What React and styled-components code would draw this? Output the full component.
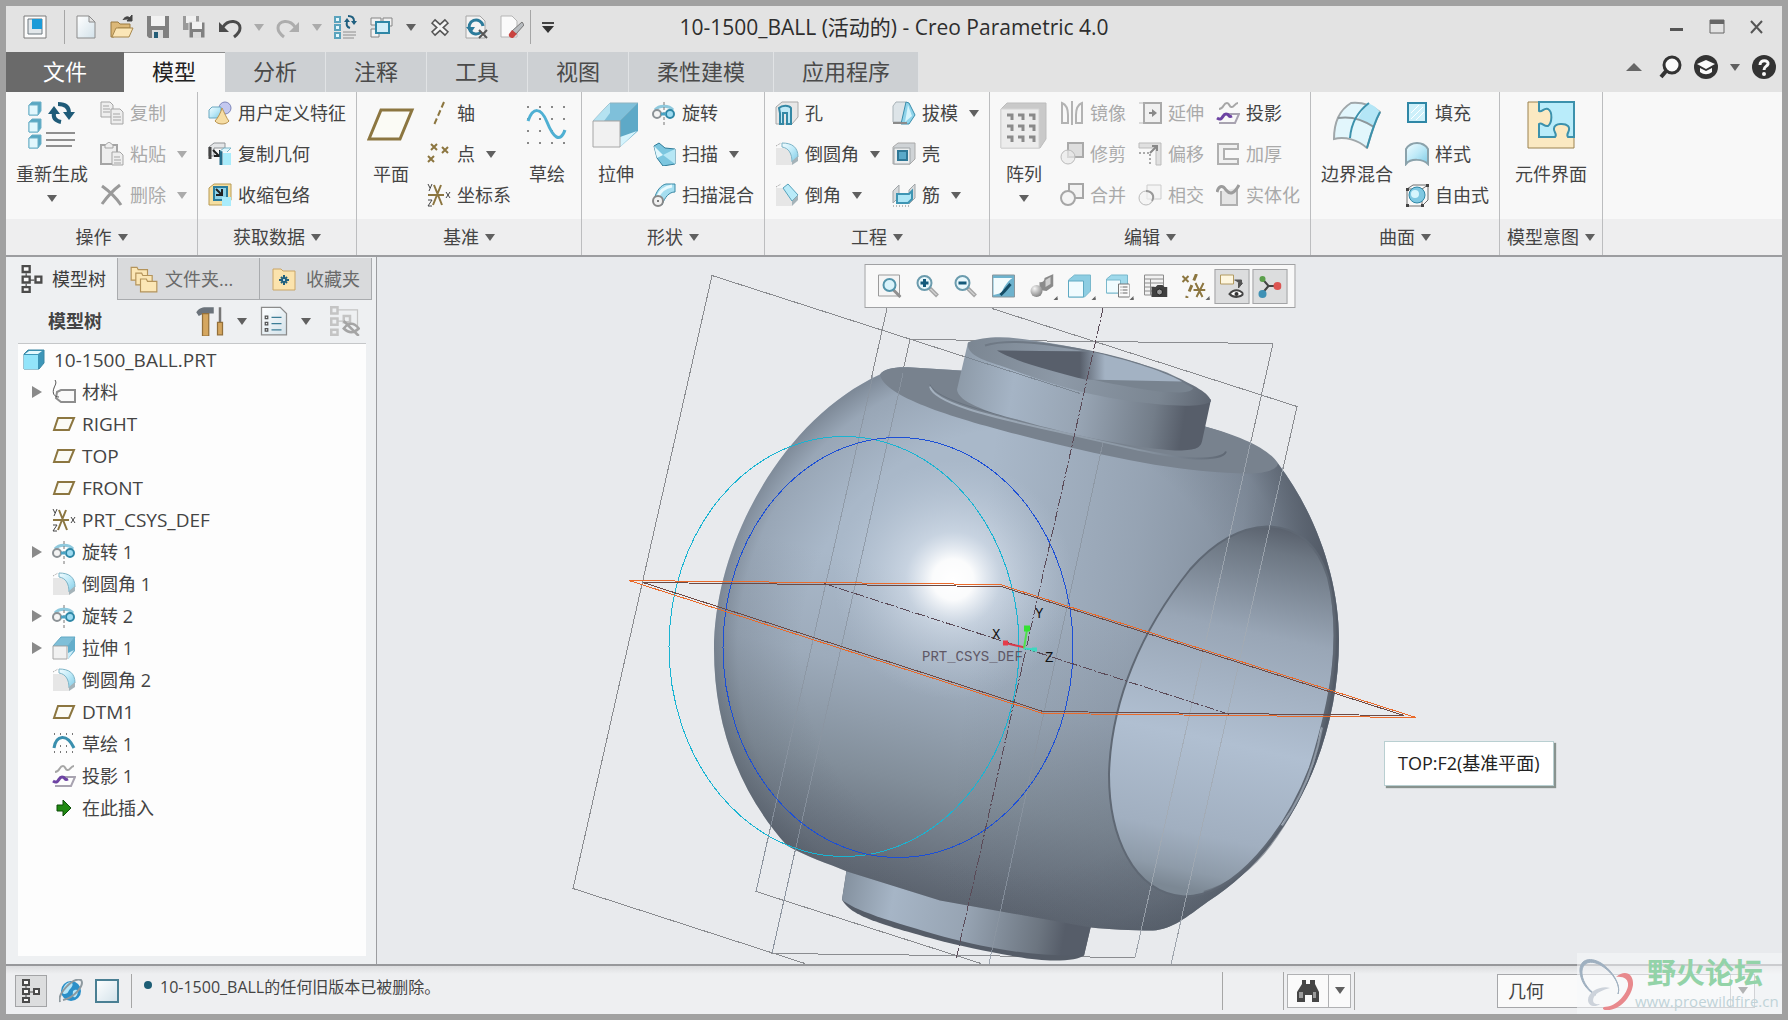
import React from "react";
import styled, { createGlobalStyle, css } from "styled-components";

const BLUE = "#2f87a6";
const PALE = "#bfeaf8";
const GOLD = "#8c7640";
const GREY = "#a5a5a5";

/* ---------- icons, 24 x 24 unless they are in the big set ---------- */

const revolve = (
  <>
    <path d="M3 9c4-5 14-5 18 0" fill="none" stroke="#8fc9dd" strokeWidth="3" />
    <path d="M12 1v23" stroke="#777" strokeDasharray="3 2" />
    <circle cx="5" cy="13" r="4" fill="#f4f4f4" stroke="#8c9296" strokeWidth="2" />
    <circle cx="18" cy="13" r="4" fill="#9fdcf2" stroke={BLUE} strokeWidth="2" />
    <path d="M9 13h5" stroke="#4aa3c3" strokeWidth="3" />
  </>
);

const round = (
  <>
    <path d="M1 6h9c5 1 7 5 7 10v7H1z" fill="#e6e6e6" />
    <path d="M7 1c10 0 16 4 16 14l-6 5C17 12 14 6 7 5z" fill="url(#aqua)" stroke="#7cb3c6" />
    <path d="M17 19l6-5v5l-6 4z" fill="#a5b3b9" />
    <path d="M1 4l5-3" stroke="#999" strokeDasharray="1 1" />
  </>
);

const extrude = (
  <>
    <path d="M1 10L9 1h14l-7 9z" fill="#7fbfd8" stroke="#63a9c4" />
    <path d="M23 1v14l-7 8V10z" fill="#63adca" />
    <path d="M16 17l6-3-6 9z" fill="#cdeefa" />
    <path d="M1 10h14v13H1z" fill="#f1f1f1" stroke="#a6a6a6" />
  </>
);

const project = (
  <>
    <path d="M3 8c5 0 4-6 8-6 3 0 2 5 5 4 2 0 3-4 6-4" fill="none" stroke="#a6a6a6" strokeWidth="2" />
    <path d="M3 22h16l4-9H11" fill="none" stroke="#a8a3b0" strokeWidth="2" />
    <path d="M1 17c6 4 5-4 9-4 4 0 2 4 6 2" fill="none" stroke="#6d43a3" strokeWidth="3" />
  </>
);

const csys = (
  <>
    <path d="M1 12h16M7 2l8 20M14 2L6 22" stroke={GOLD} strokeWidth="2" />
    <path d="M1 1l2 4M5 1L2 8M19 9l4 6M23 9l-4 6M1 17h4l-4 6h4" stroke="#444" fill="none" strokeWidth="1" />
  </>
);

const plane = <path d="M6 6h16l-5 12H2z" fill="#fbfbf5" stroke={GOLD} strokeWidth="2" />;

const treeNodes = (
  <g fill="#fafafa" stroke="#4b4b4b" strokeWidth="2">
    <path d="M7 7v3M7 16v2M10 13h4" strokeWidth="1" />
    <path d="M4 1h6v5H4zM4 10h6v5H4zM4 19h6v4H4zM15 10h5v5h-5z" />
  </g>
);

const magnifier = (
  <>
    <path d="M14 14l8 8" stroke="#a8a8a8" strokeWidth="4" />
    <path d="M15 15l6 6" stroke="#eee" strokeWidth="1" />
    <circle cx="9" cy="9" r="7" fill="#e9f8fc" stroke="#6b9bad" strokeWidth="2" />
  </>
);

const regenCubes = (
  <>
    <path d="M1 2h5v5H1zM1 10h5v5H1zM1 18h5v5H1z" fill="#e6f8fd" stroke="#5aa3bd" strokeWidth="2" />
    <path d="M9 17h13M9 20h13M9 23h11" stroke="#8e8e8e" strokeWidth="1" />
    <path d="M16 13c-3-1-4-3-3-6M14 1c4 0 6 2 6 5" fill="none" stroke="#1f5f7f" strokeWidth="2" />
    <path d="M10 7h6l-3-4zM17 6h6l-3 4z" fill="#1f5f7f" />
  </>
);

const ICONS = {
  app: (
    <>
      <path d="M1 1h22v22H1z" fill="#fcfcfc" stroke="#7b7b7b" />
      <path d="M5 4h14v15H5z" fill="#e2e7ea" stroke="#6c7880" />
      <path d="M9 4h10v10H9z" fill="#1b9bd8" />
    </>
  ),
  file: (
    <path d="M3 1h12l6 6v16H3zM15 1v6h6" fill="url(#sheet)" stroke="#8b8b8b" />
  ),
  open: (
    <>
      <path d="M1 7h7l2 2h10v4H8L4 22H1z" fill="#dcb878" stroke="#9a7a40" />
      <path d="M6 13h17l-4 9H2z" fill="#fbe6b7" stroke="#a8884d" />
      <path d="M13 5c2-4 6-4 8-1M22 0v6h-5z" fill="#444" stroke="#444" />
    </>
  ),
  save: (
    <>
      <path d="M1 1h22v22H3l-2-2z" fill="#808080" />
      <path d="M5 1h14v10H5z" fill="#f2f2f2" />
      <path d="M6 15h11v8H6z" fill="#dcdcdc" />
      <path d="M8 17h4v6H8z" fill="#245d77" />
    </>
  ),
  saveAll: (
    <>
      <path d="M1 1h16v14H1z" fill="#9a9a9a" />
      <path d="M4 1h10v7H4z" fill="#f0f0f0" />
      <path d="M7 7h16v16H7z" fill="#808080" stroke="#e3e3e3" />
      <path d="M10 7h10v7H10z" fill="#f2f2f2" />
      <path d="M11 17h8v6h-8z" fill="#dcdcdc" />
    </>
  ),
  undo: (
    <>
      <path d="M5 12c5-8 17-7 17 1 0 4-2 6-6 9" fill="none" stroke="#4b4b4b" strokeWidth="3" />
      <path d="M1 7v10h10z" fill="#4b4b4b" />
    </>
  ),
  redo: (
    <>
      <path d="M19 12C14 4 2 5 2 13c0 4 2 6 6 9" fill="none" stroke="#adadad" strokeWidth="3" />
      <path d="M23 7v10H13z" fill="#adadad" />
    </>
  ),
  regen: regenCubes,
  windows: (
    <>
      <path d="M1 3h10v7H1zM13 3h9v8h-9zM1 14h8v8H1z" fill="#f1f1f1" stroke="#858585" />
      <path d="M6 7h13v11H6z" fill="#d3eef8" stroke={BLUE} strokeWidth="2" />
    </>
  ),
  closeWin: (
    <>
      <path d="M5 6l14 13M19 6L5 19" stroke="#555" strokeWidth="6" />
      <path d="M6 7l12 11M18 7L6 18" stroke="#f5f5f5" strokeWidth="3" />
    </>
  ),
  erase: (
    <>
      <path d="M2 1h14l5 5v17H2z" fill="#f3f3f3" stroke="#a5a5a5" />
      <path d="M19 11a7 7 0 1 0-2 6" fill="none" stroke="#2c7b9b" strokeWidth="3" />
      <path d="M2 12h9l-4 6z" fill="#2c7b9b" />
      <path d="M15 15l8 8M23 15l-8 8" stroke="#555" strokeWidth="2" />
    </>
  ),
  eraser: (
    <>
      <path d="M1 1h11l5 5v16H1z" fill="#fafafa" stroke="#b5b5b5" />
      <path d="M22 7l2 3-8 9-4-3z" fill="#b7bbbf" stroke="#777" />
      <path d="M12 15l5 4-4 4c-3 0-5-2-4-4z" fill="#c9433f" />
    </>
  ),
  copy: (
    <g fill="#eee" stroke={GREY}>
      <path d="M1 1h9l3 3v12H1z" />
      <path d="M3 5h6M3 8h7M3 11h7" />
      <path d="M11 8h9l3 3v12H11z" />
      <path d="M13 13h7M13 16h8M13 19h8" />
    </g>
  ),
  paste: (
    <g fill="#eee" stroke={GREY}>
      <path d="M1 3h16v19H1z" strokeWidth="2" />
      <path d="M5 3l4-3 4 3v3H5z" />
      <path d="M12 10h8l3 3v10H12z" />
      <path d="M14 15h6M14 18h7M14 21h7" />
    </g>
  ),
  del: <path d="M2 3c7 5 13 10 19 19M20 2C12 8 7 14 2 21" fill="none" stroke="#9a9a9a" strokeWidth="3" />,
  udf: (
    <>
      <circle cx="17" cy="7" r="6" fill="#c3c8ef" stroke="#7e86bb" />
      <path d="M1 9l3-3h9v11H1z" fill="url(#aqua)" stroke="#6aa8c0" />
      <path d="M14 7c2 4 5 11 7 13-3 4-11 4-14 0 3-3 6-9 7-13z" fill="#f6dda4" stroke="#b8924e" />
    </>
  ),
  copyGeom: (
    <>
      <path d="M1 5l5-4h11v5H6v8H1z" fill="#e4e6e8" stroke="#909498" />
      <path d="M2 5v12" stroke="#444" strokeWidth="3" />
      <path d="M5 8l6 6M12 8v6H6" stroke="#222" strokeWidth="2" fill="none" />
      <path d="M15 11h8v12h-8z" fill="#a9ecfb" />
      <path d="M13 9v14" stroke="#256d8b" strokeWidth="3" />
      <path d="M12 9l4-3h7l-4 4" fill="#dff6fc" stroke="#7bb6c9" />
    </>
  ),
  shrink: (
    <>
      <path d="M1 5l5-4h17v16l-4 5H1z" fill="#f5dfa2" stroke="#b89a53" />
      <path d="M6 4h13v13H6z" fill="#8fd3e8" stroke="#2b7d9d" strokeWidth="2" />
      <path d="M8 6l6 6M14 6v6H8" stroke="#222" strokeWidth="2" fill="none" />
      <path d="M14 14h9v9h-9z" fill="#a9ecfb" />
    </>
  ),
  axis: <path d="M17 1L7 24" stroke={GOLD} strokeWidth="2" strokeDasharray="6 3" />,
  point: (
    <path
      d="M4 2l6 6M10 2l-6 6M15 5l6 6M21 5l-6 6M1 14l6 6M7 14l-6 6"
      stroke={GOLD}
      strokeWidth="2"
    />
  ),
  csys,
  revolve,
  sweep: (
    <>
      <path d="M2 4l5-3 6 5 10 1v15l-12 2-6-8z" fill="#7cc6df" stroke="#2e7c99" strokeWidth="1" />
      <path d="M2 4l3 12 6-3z" fill="#e0f7fd" />
      <path d="M11 13l12-6v15z" fill="#b6e7f5" />
    </>
  ),
  blend: (
    <>
      <path d="M2 17C4 8 9 2 14 1h9v8c-6 0-10 5-13 13z" fill="#a5def0" stroke="#3b89a5" />
      <path d="M5 15C8 8 13 4 20 3" stroke="#e9fafe" strokeWidth="3" fill="none" />
      <circle cx="6" cy="18" r="5" fill="#f1f1f1" stroke="#888" strokeWidth="2" />
      <circle cx="6" cy="18" r="1" fill="#555" />
    </>
  ),
  hole: (
    <>
      <path d="M1 6l6-5h16v15l-6 7H1z" fill="#e7e7e7" stroke="#a9a9a9" />
      <path d="M4 7c3-3 10-3 12 0v16h-4V12H8v11H5V12z" fill="#bfe9f6" stroke="#3488a5" strokeWidth="2" />
    </>
  ),
  round,
  chamfer: (
    <>
      <path d="M1 5h8l8 9v9H1z" fill="#e6e6e6" />
      <path d="M8 5l5-4 10 11-6 6z" fill="#b9ebf9" stroke="#57a2bb" />
      <path d="M17 18l6-6v5l-6 6z" fill="#a5b3b9" />
      <path d="M1 4l5-3" stroke="#999" strokeDasharray="1 1" />
    </>
  ),
  draft: (
    <>
      <path d="M1 5l3-4h10v4l-3 16H1z" fill="#dde4e8" stroke="#a9b3b8" />
      <path d="M14 1l3 1 6 12-6 9H9z" fill="#8ed3ea" stroke="#3b8eac" />
      <path d="M16 4l4 11-7 6z" fill="#d6f4fc" />
      <path d="M1 22h14" stroke="#8a8a8a" strokeWidth="2" />
    </>
  ),
  shell: (
    <>
      <path d="M1 5l5-4h17v16l-5 5H1z" fill="#cfd3d6" stroke="#a9a9a9" />
      <path d="M2 6h16v16H2z" fill="#eceeef" stroke="#a0a5a8" />
      <path d="M6 9h9v9H6z" fill="#5aa9c9" stroke="#2f7897" strokeWidth="2" />
    </>
  ),
  rib: (
    <>
      <path d="M1 8l6-6v12l-6 6z" fill="#d7dadc" stroke="#a0a5a8" />
      <path d="M17 7l6-6v14l-6 6z" fill="#d7dadc" stroke="#a0a5a8" />
      <path d="M5 11h12l3-3v8l-4 4H5z" fill="#aee6f6" stroke="#3f95b3" strokeWidth="2" />
      <path d="M1 23h17" stroke="#777" strokeDasharray="1 2" />
    </>
  ),
  mirror: (
    <path
      d="M2 2c5 2 6 7 6 12v8H2zM22 2c-5 2-6 7-6 12v8h6zM12 0v24"
      fill="none"
      stroke="#b3b3b3"
      strokeWidth="2"
    />
  ),
  extend: (
    <>
      <path d="M6 2h17v20H6z" fill="#f0f0f0" stroke="#aaa" strokeWidth="2" />
      <path d="M1 2h4M1 22h4" stroke="#bbb" />
      <path d="M11 12h5" stroke="#888" strokeWidth="2" />
      <path d="M14 8l5 4-5 4z" fill="#888" />
    </>
  ),
  trim: (
    <>
      <path d="M8 1h15v14H8z" fill="#dedede" stroke="#aaa" strokeWidth="2" />
      <circle cx="8" cy="15" r="7" fill="#e9e9e9" fillOpacity="0.7" stroke="#bbb" strokeWidth="1" />
    </>
  ),
  offset: (
    <>
      <path d="M1 1h22v22h-5V6H1z" fill="#e0e0e0" stroke="#bbb" />
      <path d="M1 11h11v12" fill="none" stroke="#aaa" strokeDasharray="2 2" strokeWidth="2" />
      <path d="M12 11l6-6M14 4h5v5" fill="none" stroke="#888" strokeWidth="2" />
    </>
  ),
  merge: (
    <>
      <path d="M9 8V1h14v14h-8" fill="#f2f2f2" stroke="#a6a6a6" strokeWidth="2" />
      <circle cx="8" cy="15" r="7" fill="#f2f2f2" fillOpacity="0.8" stroke="#a6a6a6" strokeWidth="2" />
    </>
  ),
  intersect: (
    <>
      <path d="M9 2h14v14H9z" fill="#f4f4f4" stroke="#ccc" />
      <circle cx="8" cy="15" r="7" fill="#f4f4f4" fillOpacity="0.6" stroke="#bbb" />
      <path d="M8 8c6 0 9 5 6 10" fill="none" stroke="#999" strokeWidth="2" />
    </>
  ),
  project,
  thicken: <path d="M2 2h20v5H8v10h14v5H2z" fill="#f1f1f1" stroke="#b0b0b0" strokeWidth="2" />,
  solidify: (
    <>
      <path d="M5 8v14h16V5" fill="#e5e5e5" stroke="#b0b0b0" strokeWidth="2" />
      <path d="M1 9c2-7 6-7 9-2 4 5 8 4 13-5" fill="none" stroke="#9c9c9c" strokeWidth="3" />
    </>
  ),
  fill: (
    <>
      <path d="M3 2h18v19H3z" fill="#cdf0fa" stroke={BLUE} strokeWidth="2" />
      <path d="M6 12l8-8M6 18L18 6M11 19l8-8" stroke="#fff" strokeWidth="1" />
    </>
  ),
  style: (
    <path d="M1 7c5-8 17-8 22 0v15c-5-5-17-6-22 0z" fill="url(#aqua)" stroke="#8ba2ab" strokeWidth="2" />
  ),
  freestyle: (
    <>
      <path d="M2 6l6-4h15v15l-6 6H2zM2 6h15v17M17 6l6-4" fill="none" stroke="#6e6e6e" />
      <circle cx="12" cy="12" r="8" fill="#7fc8e2" stroke={BLUE} />
      <circle cx="10" cy="11" r="4" fill="#d6f5fd" />
      <path d="M1 5h3v3H1zM21 1h3v3h-3zM1 21h3v3H1zM16 21h3v3h-3z" fill="#444" />
    </>
  ),
  tree: treeNodes,
  folders: (
    <g stroke="#b4935a" fill="#fbe6b5">
      <path d="M1 2h5l1 2h8v9H1z" />
      <path d="M5 7h5l1 2h8v8H5z" />
      <path d="M9 12h5l1 2h8v9H9z" />
    </g>
  ),
  favorite: (
    <>
      <path d="M1 2h8l2 2h12v19H1z" fill="#fbe3ad" stroke="#caa566" />
      <path d="M12 8v10M7 13h10M9 10l6 6M15 10l-6 6" stroke="#22627f" strokeWidth="2" />
      <circle cx="12" cy="13" r="1" fill="#fff" />
    </>
  ),
  tools: (
    <>
      <path d="M1 5c3-4 5-4 9-4h5v5H7L3 8z" fill="#6b737b" />
      <path d="M6 6h5v18H6z" fill="#d5a760" stroke="#94703a" />
      <path d="M20 1v12" stroke="#777" strokeWidth="2" />
      <path d="M18 13h4v10h-4z" fill="#d5a760" stroke="#94703a" />
    </>
  ),
  list: (
    <>
      <path d="M2 1h15l5 5v17H2z" fill="url(#sheet)" stroke="#8b8b8b" />
      <path d="M10 9h8M10 14h8M10 19h8" stroke="#3c7d96" />
      <path d="M5 8h2v2H5zM5 13h2v2H5zM5 18h2v2H5z" fill="none" stroke="#555" />
    </>
  ),
  hideTree: (
    <g stroke="#c4c4c4" fill="none" strokeWidth="2">
      <path d="M1 1h5v5H1zM1 10h5v5H1zM1 19h5v4H1zM11 8h5v5h-5z" />
      <path d="M6 3h16v14M6 12h5" strokeWidth="1" />
      <path d="M11 18c4-5 8-5 12 0-4 4-8 4-12 0zM11 12l12 12" stroke="#a5a5a5" />
    </g>
  ),
  part: (
    <>
      <path d="M2 6l4-4h16v13l-5 6H2z" fill="#3d96b8" stroke="#3a87a4" />
      <path d="M2 7h14v14H2z" fill="#92e4fa" />
      <path d="M3 6l4-3h13l-4 3z" fill="#e4f9fe" />
    </>
  ),
  material: (
    <>
      <path d="M5 12l4-2h14v12H9l-5-4z" fill="#fafafa" stroke="#8d8d8d" strokeWidth="2" />
      <path d="M3 0c2 3 0 5-1 8-2 5 0 9 5 9" fill="none" stroke="#555" strokeWidth="1" />
    </>
  ),
  plane,
  extrude,
  sketch: (
    <>
      <path d="M2 16C4 3 15 1 22 16" fill="none" stroke="#3a8fae" strokeWidth="3" />
      <path d="M2 2h21M2 20h21M8 14h12" stroke="#777" strokeDasharray="1 5" strokeWidth="2" />
    </>
  ),
  insert: <path d="M5 9h6V4l8 8-8 8v-5H5z" fill="#208a12" stroke="#0c4d08" />,
  refit: (
    <>
      <path d="M1 1h21v21H1z" fill="#f5f5f5" stroke="#9b9b9b" />
      <path d="M15 15l8 8" stroke="#909090" strokeWidth="3" />
      <circle cx="12" cy="11" r="6" fill="#d9f3fb" stroke="#5394ab" strokeWidth="2" />
    </>
  ),
  zoomIn: (
    <>
      {magnifier}
      <path d="M9 5v8M5 9h8" stroke="#145a7b" strokeWidth="3" />
    </>
  ),
  zoomOut: (
    <>
      {magnifier}
      <path d="M5 9h8" stroke="#145a7b" strokeWidth="3" />
    </>
  ),
  repaint: (
    <>
      <path d="M1 1h22v22H1z" fill="#6db2cd" stroke="#8a979d" />
      <path d="M2 4h19C15 8 12 14 10 19l-8 2z" fill="#f2fbfd" />
      <path d="M19 10l-6 7-4 4" stroke="#154d66" strokeWidth="3" />
    </>
  ),
  shade: (
    <>
      <path d="M10 8c4 1 5-2 5-4l9-4v12l-7 5-7-1z" fill="#8b8b8b" />
      <path d="M16 6l5-3v7l-5 3z" fill="#d0d0d0" />
      <circle cx="7" cy="17" r="6" fill="url(#steel)" />
    </>
  ),
  cube: (
    <>
      <path d="M1 6l6-5h16v16l-6 6H1z" fill="#8dcde2" stroke="#79b8cc" />
      <path d="M1 7h15v16H1z" fill="#f0fbfe" stroke="#5fa9c2" />
    </>
  ),
  views: (
    <>
      <path d="M1 5l5-4h16v14l-6 4H1z" fill="#9fd9eb" stroke="#79b8cc" />
      <path d="M1 6h14v13H1z" fill="#f0fbfe" stroke="#79b8cc" />
      <path d="M13 10h11v13H13z" fill="#fafafa" stroke="#777" />
      <path d="M15 13h7M15 16h7M15 19h7" stroke="#666" strokeDasharray="1 1 5" />
    </>
  ),
  camera: (
    <>
      <path d="M1 1h19v20H1zM1 5h19M7 5v16M1 9h19M1 13h10M1 17h10" fill="#f2f2f2" stroke="#8c8c8c" />
      <path d="M8 13h4l2-2h5l2 2h3v10H8z" fill="#3f3f3f" />
      <circle cx="16" cy="18" r="3" fill="#999" stroke="#222" />
    </>
  ),
  datums: (
    <>
      <path d="M1 2l6 6M7 2L1 8M12 16h12M14 9l7 14M22 9l-7 14" stroke={GOLD} strokeWidth="2" />
      <path d="M15 0L5 24" stroke={GOLD} strokeWidth="3" strokeDasharray="7 5" />
    </>
  ),
  annotate: (
    <>
      <path d="M1 1h13v9H1z" fill="#fdf6df" stroke="#b29a60" />
      <path d="M15 6h7v5M19 9h4l-4 5z" fill="#555" stroke="#555" />
      <path d="M10 20c4-5 10-5 14 0-4 4-10 4-14 0z" fill="#fff" stroke="#444" strokeWidth="2" />
      <circle cx="17" cy="20" r="2" fill="#333" />
    </>
  ),
  spin: (
    <>
      <path d="M5 5l6 7h8M11 12l-6 7" fill="none" stroke="#444" strokeWidth="2" />
      <circle cx="5" cy="5" r="3" fill="#5c9f4c" />
      <circle cx="20" cy="12" r="4" fill="#dc5552" />
      <circle cx="5" cy="20" r="4" fill="#3f91b5" />
    </>
  ),
  globe: (
    <>
      <circle cx="12" cy="12" r="10" fill="#2b8fc8" />
      <path d="M7 5c5-4 9 0 5 4s-2 5-6 6-3-6 1-10zM14 12c4-3 6 0 4 4s-5 3-4-4z" fill="#b5e6f9" />
      <path d="M1 23C-2 15 14-2 22 1c4 5-7 18-18 20" fill="none" stroke="#8e999f" strokeWidth="2" />
    </>
  ),
  screen: <path d="M1 1h22v22H1z" fill="url(#sheet)" stroke="#4a7f93" strokeWidth="2" />,
  binoculars: (
    <>
      <path d="M6 1h4v4h4V1h5v4l4 8v10h-7v-7H9v7H1V13l5-8z" fill="#454545" />
      <path d="M3 13h4v6H3zM17 13h3v6h-3z" fill="#9b9b9b" />
    </>
  ),
  search: (
    <>
      <path d="M9 15l-6 7" stroke="#333" strokeWidth="4" />
      <circle cx="14" cy="10" r="8" fill="#fafafa" stroke="#333" strokeWidth="3" />
    </>
  ),
  learn: (
    <>
      <circle cx="12" cy="12" r="12" fill="#333" />
      <path d="M3 9l9-4 9 4-9 5z" fill="#fafafa" />
      <path d="M6 13l6 3 6-3v4c-4 3-8 3-12 0z" fill="#fafafa" />
    </>
  ),
  help: (
    <>
      <circle cx="12" cy="12" r="12" fill="#333" />
      <path d="M8 10c0-6 9-5 8-1-1 3-4 2-4 6" fill="none" stroke="#fafafa" strokeWidth="3" />
      <circle cx="12" cy="19" r="2" fill="#fafafa" />
    </>
  ),
  minimize: <path d="M5 13h13v3H5z" fill="#555" />,
  restore: (
    <>
      <path d="M5 5h14v13H5z" fill="none" stroke="#666" strokeWidth="1" />
      <path d="M5 5h14v4H5z" fill="#666" />
    </>
  ),
  closeApp: <path d="M6 6l11 12M17 6L6 18" stroke="#555" strokeWidth="2" />,
};

const BIG_ICONS = {
  regenerate: (
    <>
      {[1, 18, 34].map((y) => (
        <g key={y} stroke="#6db0c7">
          <path d={`M1 ${y + 3}l3-3h9v9l-3 4H1z`} fill="#58a7c3" />
          <path d={`M1 ${y + 3}h9v10H1z`} fill="#e1f7fd" />
        </g>
      ))}
      <path d="M18 32h29M18 39h29M18 45h26" stroke="#8f8f8f" strokeWidth="2" />
      <path d="M33 21c-5-1-8-4-7-9M30 3c7 0 11 3 11 9" fill="none" stroke="#1f5b78" strokeWidth="4" />
      <path d="M20 13h12l-6-8zM35 11h12l-6 8z" fill="#1f5b78" />
    </>
  ),
  plane: <path d="M14 9h31L33 38H2z" fill="#fbfbf5" stroke={GOLD} strokeWidth="3" />,
  sketch: (
    <>
      <path d="M4 6h42M4 18h42M4 30h42M4 42h42" stroke="#888" strokeWidth="2" strokeDasharray="2 10" />
      <path d="M5 20C10 6 18 6 24 21s13 22 18 8" fill="none" stroke="#4fb0d3" strokeWidth="3" />
    </>
  ),
  extrude: (
    <>
      <path d="M1 20L18 2h28L28 20z" fill="#7fc0da" stroke="#8fb3c0" />
      <path d="M18 2v10l-6 8H1z" fill="#b5e2f1" />
      <path d="M46 2v28L28 46V20z" fill="#5ea9c7" />
      <path d="M28 36l17-6-17 16z" fill="#d5f3fc" />
      <path d="M1 20h27v26H1z" fill="#f1f1f1" stroke="#a6a6a6" strokeWidth="1" />
    </>
  ),
  pattern: (
    <>
      <path d="M1 8l6-6h39v36l-6 9H1z" fill="#c9c9c9" stroke="#bdbdbd" />
      <path d="M1 8h38v39H1z" fill="#ececec" stroke="#d4d4d4" />
      {[14, 25, 36].map((y) => (
        <path key={y} d={`M7 ${y}h5v5M18 ${y}h5v5M29 ${y}h5v5`} fill="none" stroke="#8a8a8a" strokeWidth="3" />
      ))}
    </>
  ),
  boundary: (
    <>
      <path d="M1 38C1 20 8 8 18 2c10-1 19 1 29 9-6 11-9 22-13 36C25 39 12 35 1 38z" fill="#e2f6fc" stroke="#a0a7aa" strokeWidth="2" />
      <path d="M34 2c7 2 10 5 13 9-3 5-5 10-7 16-5-4-11-7-16-8z" fill="#b4e6f6" />
      <path d="M5 17c12-2 24 1 36 9" fill="none" stroke="#8d979b" strokeWidth="2" />
      <path d="M36 2C24 11 18 24 17 37M47 11c-6 11-9 22-13 36" fill="none" stroke="#3c91ac" strokeWidth="2" />
    </>
  ),
  component: (
    <>
      <path d="M1 1h46v46H1z" fill="#fbe9c2" stroke="#9b8250" strokeWidth="1" />
      <path
        d="M12 1h35v35h-6c-3-3 4-7 0-11-3-3-13-3-14 2-1 4 4 6 1 9H12V23c3-2 5 3 9 2 4-3 5-14 0-17-4-2-6 4-9 2z"
        fill="#b9ecfa"
        stroke="#3c91ac"
        strokeWidth="2"
      />
    </>
  ),
};

const Glyph = styled.svg`
  display: block;
  flex: none;
  width: ${(p) => p.$size}px;
  height: ${(p) => p.$size}px;
`;

const Icon = ({ name, size = 24 }) => (
  <Glyph $size={size} viewBox="0 0 24 24" aria-hidden="true">
    {ICONS[name]}
  </Glyph>
);

const BigIcon = ({ name }) => (
  <Glyph $size={48} viewBox="0 0 48 48" aria-hidden="true">
    {BIG_ICONS[name]}
  </Glyph>
);

const SharedPaints = () => (
  <PaintHolder width="0" height="0" aria-hidden="true">
    <defs>
      <linearGradient id="aqua" x1="0" y1="0" x2="1" y2="1">
        <stop offset="0" stopColor="#f2fcff" />
        <stop offset="0.5" stopColor={PALE} />
        <stop offset="1" stopColor="#7fcbe6" />
      </linearGradient>
      <linearGradient id="sheet" x1="0" y1="0" x2="1" y2="1">
        <stop offset="0" stopColor="#ffffff" />
        <stop offset="1" stopColor="#d3e2ea" />
      </linearGradient>
      <radialGradient id="steel" cx="0.35" cy="0.3" r="0.8">
        <stop offset="0" stopColor="#f5f5f5" />
        <stop offset="1" stopColor="#777" />
      </radialGradient>
    </defs>
  </PaintHolder>
);

/* ---------- data ---------- */

const quickTools = [
  { icon: "file", label: "新建" },
  { icon: "open", label: "打开" },
  { icon: "save", label: "保存" },
  { icon: "saveAll", label: "保存副本" },
  { icon: "undo", label: "撤消", menu: true, off: true },
  { icon: "redo", label: "重做", menu: true, off: true },
  { icon: "regen", label: "重新生成" },
  { icon: "windows", label: "窗口", menu: true },
  { icon: "closeWin", label: "关闭" },
  { icon: "erase", label: "拭除未显示的" },
  { icon: "eraser", label: "拭除当前" },
];

const ribbonTabs = ["模型", "分析", "注释", "工具", "视图", "柔性建模", "应用程序"];

const groups = [
  {
    title: "操作",
    parts: [
      { big: "regenerate", label: "重新生成", menu: true },
      [
        { icon: "copy", label: "复制", off: true },
        { icon: "paste", label: "粘贴", off: true, menu: true },
        { icon: "del", label: "删除", off: true, menu: true },
      ],
    ],
  },
  {
    title: "获取数据",
    parts: [
      [
        { icon: "udf", label: "用户定义特征" },
        { icon: "copyGeom", label: "复制几何" },
        { icon: "shrink", label: "收缩包络" },
      ],
    ],
  },
  {
    title: "基准",
    parts: [
      { big: "plane", label: "平面" },
      [
        { icon: "axis", label: "轴" },
        { icon: "point", label: "点", menu: true },
        { icon: "csys", label: "坐标系" },
      ],
      { big: "sketch", label: "草绘" },
    ],
  },
  {
    title: "形状",
    parts: [
      { big: "extrude", label: "拉伸" },
      [
        { icon: "revolve", label: "旋转" },
        { icon: "sweep", label: "扫描", menu: true },
        { icon: "blend", label: "扫描混合" },
      ],
    ],
  },
  {
    title: "工程",
    parts: [
      [
        { icon: "hole", label: "孔" },
        { icon: "round", label: "倒圆角", menu: true },
        { icon: "chamfer", label: "倒角", menu: true },
      ],
      [
        { icon: "draft", label: "拔模", menu: true },
        { icon: "shell", label: "壳" },
        { icon: "rib", label: "筋", menu: true },
      ],
    ],
  },
  {
    title: "编辑",
    parts: [
      { big: "pattern", label: "阵列", menu: true },
      [
        { icon: "mirror", label: "镜像", off: true },
        { icon: "trim", label: "修剪", off: true },
        { icon: "merge", label: "合并", off: true },
      ],
      [
        { icon: "extend", label: "延伸", off: true },
        { icon: "offset", label: "偏移", off: true },
        { icon: "intersect", label: "相交", off: true },
      ],
      [
        { icon: "project", label: "投影" },
        { icon: "thicken", label: "加厚", off: true },
        { icon: "solidify", label: "实体化", off: true },
      ],
    ],
  },
  {
    title: "曲面",
    parts: [
      { big: "boundary", label: "边界混合" },
      [
        { icon: "fill", label: "填充" },
        { icon: "style", label: "样式" },
        { icon: "freestyle", label: "自由式" },
      ],
    ],
  },
  { title: "模型意图", parts: [{ big: "component", label: "元件界面" }] },
];

const treeItems = [
  { icon: "material", label: "材料", open: true },
  { icon: "plane", label: "RIGHT", latin: true },
  { icon: "plane", label: "TOP", latin: true },
  { icon: "plane", label: "FRONT", latin: true },
  { icon: "csys", label: "PRT_CSYS_DEF", latin: true },
  { icon: "revolve", label: "旋转 1", open: true },
  { icon: "round", label: "倒圆角 1" },
  { icon: "revolve", label: "旋转 2", open: true },
  { icon: "extrude", label: "拉伸 1", open: true },
  { icon: "round", label: "倒圆角 2" },
  { icon: "plane", label: "DTM1", latin: true },
  { icon: "sketch", label: "草绘 1" },
  { icon: "project", label: "投影 1" },
  { icon: "insert", label: "在此插入" },
];

const viewTools = [
  { icon: "refit", label: "重新调整" },
  { icon: "zoomIn", label: "放大" },
  { icon: "zoomOut", label: "缩小" },
  { icon: "repaint", label: "重画" },
  { icon: "shade", label: "渲染选项", corner: true },
  { icon: "cube", label: "显示样式", corner: true },
  { icon: "views", label: "已保存方向", corner: true },
  { icon: "camera", label: "视图管理器" },
  { icon: "datums", label: "基准显示过滤器", corner: true },
  { icon: "annotate", label: "注释显示", on: true },
  { icon: "spin", label: "旋转中心", on: true },
];

/* ---------- the part in the graphics window ---------- */

const BALL =
  "M880 375C884 369 896 367 912 368L961 371L1205 427C1235 436 1262 447 1278 464C1316 514 1339 580 1339 640C1339 745 1290 850 1208 902C1186 918 1172 930 1153 931C1130 931 1110 930 1091 928L940 901L847 872C828 864 806 857 787 846C742 796 714 730 714 650C714 545 782 420 880 375Z";
const BORE =
  "M1267 527C1297 527 1318 545 1328 578C1343 640 1331 700 1310 768C1286 830 1236 897 1184 897C1132 893 1109 835 1109 775C1111 700 1142 630 1190 570C1212 545 1238 528 1267 527Z";

const Model = () => (
  <Scene viewBox="377 257 1405 708" preserveAspectRatio="xMidYMid slice" role="img" aria-label="10-1500_BALL">
    <defs>
      <linearGradient id="ballBase" gradientUnits="userSpaceOnUse" x1="1080" y1="430" x2="960" y2="925">
        <stop offset="0" stopColor="#a9b8c9" />
        <stop offset="0.35" stopColor="#a9b8c9" />
        <stop offset="0.55" stopColor="#9dabbb" />
        <stop offset="0.75" stopColor="#828e9a" />
        <stop offset="0.9" stopColor="#68717d" />
        <stop offset="1" stopColor="#585f6a" />
      </linearGradient>
      <radialGradient id="ballEdge" gradientUnits="userSpaceOnUse" cx="1022" cy="650" r="316">
        <stop offset="0.7" stopColor="#4d5560" stopOpacity="0" />
        <stop offset="0.9" stopColor="#4d5560" stopOpacity="0.18" />
        <stop offset="1" stopColor="#4d5560" stopOpacity="0.55" />
      </radialGradient>
      <linearGradient id="ballRight" gradientUnits="userSpaceOnUse" x1="980" y1="560" x2="1320" y2="600">
        <stop offset="0" stopColor="#525a66" stopOpacity="0" />
        <stop offset="0.45" stopColor="#525a66" stopOpacity="0.22" />
        <stop offset="0.75" stopColor="#525a66" stopOpacity="0.42" />
        <stop offset="1" stopColor="#525a66" stopOpacity="0.95" />
      </linearGradient>
      <radialGradient id="ballShine" gradientUnits="userSpaceOnUse" cx="953" cy="580" r="120">
        <stop offset="0" stopColor="#fff" />
        <stop offset="0.17" stopColor="#fff" stopOpacity="0.95" />
        <stop offset="0.4" stopColor="#e6eef8" stopOpacity="0.5" />
        <stop offset="1" stopColor="#c5d2e2" stopOpacity="0" />
      </radialGradient>
      <linearGradient id="bore" gradientUnits="userSpaceOnUse" x1="1290" y1="525" x2="1210" y2="895">
        <stop offset="0" stopColor="#565d69" />
        <stop offset="0.08" stopColor="#6d7783" />
        <stop offset="0.3" stopColor="#99a6b6" />
        <stop offset="0.6" stopColor="#b0bfd1" />
        <stop offset="0.85" stopColor="#a1afc0" />
        <stop offset="0.95" stopColor="#8e9ba9" />
        <stop offset="1" stopColor="#7c8894" />
      </linearGradient>
      <linearGradient id="hub" gradientUnits="userSpaceOnUse" x1="957" y1="380" x2="1210" y2="420">
        <stop offset="0" stopColor="#8d9aa8" />
        <stop offset="0.22" stopColor="#a5b4c5" />
        <stop offset="0.5" stopColor="#97a4b3" />
        <stop offset="0.78" stopColor="#737d89" />
        <stop offset="0.9" stopColor="#575e6a" />
        <stop offset="1" stopColor="#575e6a" />
      </linearGradient>
      <linearGradient id="rim" gradientUnits="userSpaceOnUse" x1="967" y1="340" x2="1210" y2="400">
        <stop offset="0" stopColor="#7b8692" />
        <stop offset="0.4" stopColor="#8d99a7" />
        <stop offset="0.8" stopColor="#7b8692" />
        <stop offset="1" stopColor="#5e6672" />
      </linearGradient>
      <linearGradient id="hubHole" gradientUnits="userSpaceOnUse" x1="1080" y1="0" x2="1105" y2="0">
        <stop offset="0" stopColor="#585f6b" />
        <stop offset="1" stopColor="#a3b2c3" />
      </linearGradient>
      <linearGradient id="groove" gradientUnits="userSpaceOnUse" x1="930" y1="0" x2="1226" y2="0">
        <stop offset="0" stopColor="#a4b1bf" />
        <stop offset="0.7" stopColor="#8b97a4" />
        <stop offset="1" stopColor="#5f6874" />
      </linearGradient>
      <linearGradient id="foot" gradientUnits="userSpaceOnUse" x1="842" y1="900" x2="1088" y2="945">
        <stop offset="0" stopColor="#8592a0" />
        <stop offset="0.2" stopColor="#a6b5c6" />
        <stop offset="0.5" stopColor="#97a4b3" />
        <stop offset="0.8" stopColor="#6c7580" />
        <stop offset="0.9" stopColor="#565d69" />
        <stop offset="1" stopColor="#565d69" />
      </linearGradient>
    </defs>

    {/* datum planes behind the body */}
    <g fill="none" stroke="#8a8c90" shapeRendering="crispEdges">
      <path d="M712 276L573 889L805 964M712 276L964 357" />
      <path d="M887 309L756 892L981 964M992 309L1297 407L1171 965" />
      <path d="M910 340L772 954L1135 958L1273 344z" />
    </g>

    <path d="M847 868L842 900C850 915 872 923 943 942C990 953 1030 961 1054 961C1070 961 1080 959 1084 956L1092 922z" fill="#555c67" />
    <path d="M847 868L842 900C852 910 890 922 943 937C990 949 1030 957 1084 956L1092 922z" fill="url(#foot)" />
    <path d={BALL} fill="url(#ballBase)" />
    <path d={BALL} fill="url(#ballEdge)" />
    <path d={BALL} fill="url(#ballRight)" />
    <circle cx="953" cy="580" r="120" fill="url(#ballShine)" />

    <path
      d="M880 375C884 369 896 367 912 368L961 371L1205 427C1240 436 1270 450 1278 464C1277 471 1262 474 1250 474C1190 474 1120 460 1058 445C980 426 884 401 880 375Z"
      fill="#78828e"
    />
    <path
      d="M930 387C934 403 985 416 1058 432C1125 447 1160 457 1195 459C1212 459 1224 458 1226 452"
      fill="none"
      stroke="url(#groove)"
      strokeWidth="2"
    />
    <path d="M930 385C936 400 985 413 1058 429" fill="none" stroke="#69737f" />

    <path
      d="M968 343L957 390C958 402 985 412 1017 420C1080 438 1140 449 1175 451C1195 451 1200 449 1202 442L1211 400z"
      fill="url(#hub)"
    />
    <path
      d="M968 343C985 336 1010 337 1033 341C1090 349 1140 363 1167 373C1195 386 1210 394 1211 402C1200 409 1165 406 1133 402C1090 396 1060 388 1000 366C980 360 966 354 968 343Z"
      fill="url(#rim)"
    />
    <path d="M985 346C1010 338 1060 346 1090 352C1140 362 1175 377 1193 389" fill="none" stroke="#6f7985" strokeWidth="2" />
    <path d="M997 351L1090 352C1130 360 1170 373 1193 389C1190 397 1150 391 1133 388C1090 381 1015 363 997 351Z" fill="#78838f" />
    <path d="M997 351L1090 352C1125 360 1160 370 1182 382L1085 380C1050 371 1015 362 997 351Z" fill="url(#hubHole)" />

    <path d={BORE} fill="url(#bore)" stroke="#5f6874" strokeWidth="2" />
    <path d="M1322 728C1315 765 1300 800 1282 826" fill="none" stroke="#d8e3ef" strokeWidth="2" />
    <path d="M1333 600C1343 690 1312 790 1270 845C1250 872 1228 886 1204 893" fill="none" stroke="#5d6672" strokeWidth="3" opacity="0.6" />

    {/* plane edges showing through */}
    <g fill="none" stroke="#8b95a1" opacity="0.8" shapeRendering="crispEdges">
      <path d="M873 376L756 892M903 374L772 954M1103 443L989 964" />
      <path d="M1251 441L1135 958M1283 468L1171 965" stroke="#a3abb4" />
      <path d="M964 357L1080 394" stroke="#77828e" />
    </g>

    <g fill="none" shapeRendering="crispEdges">
      <ellipse cx="844" cy="647" rx="175" ry="210" stroke="#19b4d2" />
      <ellipse cx="898" cy="648" rx="175" ry="210" stroke="#1c4fd6" />
    </g>

    <g fill="none" stroke="#5a4a57" strokeDasharray="10 2 2 2" shapeRendering="crispEdges">
      <path d="M1103 309L956 960" />
      <path d="M824 584L1230 715" />
    </g>

    <g fill="none" shapeRendering="crispEdges">
      <path d="M643 583L1001 587L1404 716L1043 712z" stroke="#6d4a45" />
      <path d="M629 581L1000 585L1416 718L1043 714z" stroke="#ea6a2a" />
    </g>

    <path d="M1025 648L1003 643" stroke="#d83a4a" strokeWidth="2" />
    <path d="M1024 649L1027 630" stroke="#4fe04c" strokeWidth="2" />
    <path d="M1024 649L1035 650" stroke="#3cd8c0" strokeWidth="2" />
    <path d="M1003 641h5v5h-5z" fill="#e53b49" />
    <path d="M1024 626h6v6h-6z" fill="#33e232" />
    <path d="M1032 648h5v4h-5z" fill="#3cd8c0" />
    <SceneText x="922" y="661">PRT_CSYS_DEF</SceneText>
    <SceneText x="992" y="639" $dark>X</SceneText>
    <SceneText x="1035" y="618" $dark>Y</SceneText>
    <SceneText x="1045" y="662" $dark>Z</SceneText>
  </Scene>
);

const RibbonPart = ({ part }) => {
  if (Array.isArray(part)) {
    return (
      <ButtonColumn>
        {part.map((b) => (
          <SmallButton key={b.label} type="button" disabled={b.off}>
            <Icon name={b.icon} />
            <span>{b.label}</span>
            {b.menu && <Caret $far $off={b.off} />}
          </SmallButton>
        ))}
      </ButtonColumn>
    );
  }
  return (
    <BigButton type="button">
      <BigIcon name={part.big} />
      <span>{part.label}</span>
      {part.menu && <Caret />}
    </BigButton>
  );
};

const App = () => {
  return (
    <Window>
      <GlobalStyle />
      <SharedPaints />
      <TitleBar>
        <QuickBar>
          <IconButton type="button" aria-label="Creo Parametric">
            <Icon name="app" />
          </IconButton>
          <BarLine $tight />
          {quickTools.map((t) => (
            <React.Fragment key={t.icon}>
              <IconButton type="button" aria-label={t.label}>
                <Icon name={t.icon} />
              </IconButton>
              {t.menu && <Caret $off={t.off} />}
            </React.Fragment>
          ))}
          <QuickEnd>
            <BarLine />
            <MoreButton type="button" aria-label="自定义快速访问工具栏">
              <Caret $wide />
            </MoreButton>
          </QuickEnd>
        </QuickBar>
        <Title>10-1500_BALL (活动的) - Creo Parametric 4.0</Title>
        <WindowButtons>
          <IconButton type="button" aria-label="最小化">
            <Icon name="minimize" />
          </IconButton>
          <IconButton type="button" aria-label="还原">
            <Icon name="restore" />
          </IconButton>
          <IconButton type="button" aria-label="关闭窗口">
            <Icon name="closeApp" />
          </IconButton>
        </WindowButtons>
      </TitleBar>

      <TabBar>
        <RibbonTab type="button" $file>
          文件
        </RibbonTab>
        {ribbonTabs.map((t, i) => (
          <RibbonTab key={t} type="button" $active={i === 0}>
            {t}
          </RibbonTab>
        ))}
        <HelpArea>
          <IconButton type="button" aria-label="最小化功能区">
            <UpMark />
          </IconButton>
          <IconButton type="button" aria-label="搜索">
            <Icon name="search" />
          </IconButton>
          <IconButton type="button" aria-label="学习">
            <Icon name="learn" />
          </IconButton>
          <Caret />
          <IconButton type="button" aria-label="帮助">
            <Icon name="help" />
          </IconButton>
        </HelpArea>
      </TabBar>

      <Ribbon>
        {groups.map((g) => (
          <Group key={g.title}>
            <GroupBody>
              {g.parts.map((p, i) => (
                <RibbonPart key={i} part={p} />
              ))}
            </GroupBody>
            <GroupTitle type="button">
              {g.title}
              <Caret />
            </GroupTitle>
          </Group>
        ))}
        <Group $rest>
          <GroupBody />
          <GroupTitle as="div" />
        </Group>
      </Ribbon>

      <Work>
        <Navigator>
          <NavTabs>
            <NavTab type="button" $active>
              <Icon name="tree" size={28} />
              模型树
            </NavTab>
            <NavTab type="button" $grow>
              <Icon name="folders" size={28} />
              文件夹...
            </NavTab>
            <NavTab type="button">
              <Icon name="favorite" />
              收藏夹
            </NavTab>
          </NavTabs>
          <TreeHeader>
            <h2>模型树</h2>
            <IconButton type="button" aria-label="设置">
              <Icon name="tools" size={30} />
            </IconButton>
            <Caret />
            <IconButton type="button" aria-label="显示">
              <Icon name="list" size={30} />
            </IconButton>
            <Caret />
            <IconButton type="button" aria-label="隐藏模型树">
              <Icon name="hideTree" size={30} />
            </IconButton>
          </TreeHeader>
          <Tree>
            <TreeRow $root $latin>
              <Icon name="part" />
              <span>10-1500_BALL.PRT</span>
            </TreeRow>
            {treeItems.map((t) => (
              <TreeRow key={t.label} $latin={t.latin}>
                <Expander $shown={t.open} />
                <Icon name={t.icon} />
                <span>{t.label}</span>
              </TreeRow>
            ))}
          </Tree>
        </Navigator>

        <Viewport>
          <Model />
          <ViewBar>
            {viewTools.map((t) => (
              <ViewButton key={t.icon} type="button" aria-label={t.label} $on={t.on}>
                <Icon name={t.icon} />
                {t.corner && <Corner />}
              </ViewButton>
            ))}
          </ViewBar>
          <Tooltip role="tooltip">TOP:F2(基准平面)</Tooltip>
        </Viewport>
      </Work>

      <StatusBar>
        <StatusToggle type="button" aria-label="模型树">
          <Icon name="tree" />
        </StatusToggle>
        <IconButton type="button" aria-label="浏览器">
          <Icon name="globe" />
        </IconButton>
        <IconButton type="button" aria-label="全屏">
          <Icon name="screen" />
        </IconButton>
        <BarLine />
        <Message>10-1500_BALL的任何旧版本已被删除。</Message>
        <FindArea>
          <FindButton type="button" aria-label="查找">
            <Icon name="binoculars" />
          </FindButton>
          <FindMenu type="button" aria-label="查找选项">
            <Caret />
          </FindMenu>
        </FindArea>
        <FilterBox>
          <select aria-label="选择过滤器" defaultValue="几何">
            <option>几何</option>
          </select>
          <FilterArrow>
            <Caret />
          </FilterArrow>
        </FilterBox>
        <Watermark>
          <svg width="58" height="58" viewBox="0 0 58 58" aria-hidden="true">
            <path d="M3 17C2 5 12 1 24 8c12 8 20 22 17 31 3-9-5-21-16-28C14 4 4 7 5 19c1 9 7 16 14 21C10 36 4 27 3 17z" fill="#9fb0c0" stroke="#9fb0c0" />
            <path d="M39 22c9-8 18-3 17 8-2 13-14 26-27 25-3 0-4-2-2-3 11 0 22-11 24-21 1-7-5-10-12-9z" fill="#e8898d" />
            <path d="M33 33c-8-3-22 3-22 12 0 6 7 8 12 4-7 1-8-3-6-7 3-5 9-7 16-9z" fill="#cdd3db" />
          </svg>
          <div>
            <strong>野火论坛</strong>
            <span>www.proewildfire.cn</span>
          </div>
        </Watermark>
      </StatusBar>
    </Window>
  );
};

/* ---------- styles ---------- */

const GlobalStyle = createGlobalStyle`
  * {
    box-sizing: border-box;
  }
  body {
    margin: 0;
    overflow: hidden;
    font-family: "Open Sans", "Noto Sans CJK SC", sans-serif;
    font-size: 18px;
    line-height: 24px;
    color: #444;
  }
  button, select {
    margin: 0;
    padding: 0;
    border: 0;
    background: none;
    font: inherit;
    color: inherit;
  }
`;

const PaintHolder = styled.svg`
  position: absolute;
`;

const Window = styled.div`
  display: flex;
  flex-direction: column;
  height: 100vh;
  border: 6px solid #a1a1a1;
  background: #eeeff1;
`;

const Caret = styled.i`
  flex: none;
  width: 0;
  border: 5px solid transparent;
  border-top: 7px solid #606060;
  border-bottom: 0;
  ${(p) => p.$far && "margin-left: 5px;"}
  ${(p) => p.$off && "border-top-color: #ababab;"}
  ${(p) =>
    p.$wide &&
    css`
      border-width: 7px 6px 0;
      border-top-color: #333;
    `}
`;

const BarLine = styled.i`
  flex: none;
  width: 1px;
  height: 34px;
  background: #a6a6a6;
  ${(p) => p.$tight && "margin: 0 -3px 0 5px;"}
`;

const IconButton = styled.button`
  display: flex;
  flex: none;
  align-items: center;
  justify-content: center;
  min-width: 24px;
  height: 24px;
`;

const TitleBar = styled.header`
  display: grid;
  grid-template-columns: 1fr auto 1fr;
  align-items: center;
  flex: none;
  height: 46px;
  padding-bottom: 4px;
  background: #e3e3e3;
`;

const QuickBar = styled.div`
  display: flex;
  align-items: center;
  gap: 12px;
  padding-left: 17px;
`;

const QuickEnd = styled.div`
  display: flex;
  align-items: center;
  gap: 11px;
  margin-left: -6px;
`;

const MoreButton = styled.button`
  display: grid;
  gap: 2px;
  &::before {
    height: 2px;
    background: #444;
    content: "";
  }
`;

const Title = styled.h1`
  margin: 0;
  font-size: 21px;
  font-weight: 400;
  line-height: 28px;
  color: #2e2e2e;
`;

const WindowButtons = styled.div`
  display: flex;
  justify-content: flex-end;
  gap: 16px;
  padding-right: 13px;
`;

const TabBar = styled.nav`
  display: flex;
  flex: none;
  height: 40px;
  background: #e3e3e3;
`;

const RibbonTab = styled.button`
  padding: 0 28px 3px;
  border-right: 1px solid #e1e3e5;
  background: #cdd0d3;
  font-size: 22px;
  line-height: 28px;
  color: #4a4a4a;
  ${(p) =>
    p.$file &&
    css`
      padding: 0 37px 3px;
      border: 0;
      background: #6a6a6a;
      color: #fff;
    `}
  ${(p) =>
    p.$active &&
    css`
      padding: 0 29px 4px 28px;
      border-top: 1px solid #8d8d8d;
      border-right: 0;
      background: #f8f8f8;
      color: #222;
    `}
`;

const HelpArea = styled.div`
  display: flex;
  align-items: center;
  gap: 12px;
  margin-left: auto;
  padding: 0 6px 10px 0;
`;

const UpMark = styled.i`
  border: 8px solid transparent;
  border-top: 0;
  border-bottom: 8px solid #666;
`;

const Ribbon = styled.section`
  display: flex;
  flex: none;
  border-bottom: 2px solid #9c9da0;
  background: #f8f8f8;
`;

const Group = styled.div`
  display: flex;
  flex-direction: column;
  flex: none;
  min-width: 103px;
  border-right: 1px solid #bcbdbf;
  ${(p) =>
    p.$rest &&
    css`
      flex: 1;
      border: 0;
    `}
`;

const GroupBody = styled.div`
  display: flex;
  justify-content: center;
  align-items: flex-start;
  gap: 12px;
  height: 127px;
  padding: 1px 10px 0;
`;

const GroupTitle = styled.button`
  display: flex;
  align-items: center;
  justify-content: center;
  gap: 6px;
  height: 36px;
  background: #eeeeef;
`;

const ButtonColumn = styled.div`
  display: grid;
  grid-template-rows: repeat(3, 40px);
  gap: 1px;
`;

const SmallButton = styled.button`
  display: flex;
  align-items: center;
  gap: 6px;
  white-space: nowrap;
  &:disabled {
    color: #aaa;
  }
`;

const BigButton = styled.button`
  display: flex;
  flex-direction: column;
  align-items: center;
  min-width: 48px;
  padding-top: 8px;
  white-space: nowrap;
  span {
    margin: 13px 0 9px;
  }
`;

const Work = styled.main`
  display: flex;
  flex: 1;
  min-height: 0;
`;

const Navigator = styled.aside`
  display: flex;
  flex-direction: column;
  flex: none;
  width: 371px;
  padding: 1px 4px 8px 0;
  border-right: 1px solid #9c9da0;
  background: #eef0f2;
`;

const NavTabs = styled.div`
  display: flex;
  height: 42px;
`;

const NavTab = styled.button`
  display: flex;
  align-items: center;
  gap: 10px;
  padding: 0 11px 0 12px;
  border: 1px solid #a9abae;
  border-top: 0;
  border-left: 0;
  background: #d9dadc;
  color: #6a6a6a;
  ${(p) => p.$grow && "flex: 1; gap: 7px;"}
  ${(p) =>
    p.$active &&
    css`
      gap: 6px;
      border-bottom: 0;
      background: none;
      color: #3c3c3c;
    `}
`;

const TreeHeader = styled.div`
  display: flex;
  align-items: center;
  gap: 12px;
  height: 43px;
  padding: 0 12px 1px 42px;
  h2 {
    flex: 1;
    margin: 0;
    font-size: 18px;
    font-weight: 700;
  }
  button:last-child {
    margin-left: 7px;
  }
`;

const Tree = styled.ul`
  flex: 1;
  margin: 0 6px 0 12px;
  padding: 0;
  border-top: 1px solid #c5c7c9;
  background: #fdfdfd;
  list-style: none;
`;

const TreeRow = styled.li`
  display: flex;
  align-items: center;
  gap: ${(p) => (p.$root ? 8 : 6)}px;
  height: 32px;
  padding-left: ${(p) => (p.$root ? 4 : 14)}px;
  font-size: ${(p) => (p.$latin ? 19 : 18)}px;
`;

const Expander = styled.i`
  width: 10px;
  margin-right: 4px;
  border: 6px solid transparent;
  border-left: 10px solid #8a8a8a;
  border-right: 0;
  visibility: ${(p) => (p.$shown ? "visible" : "hidden")};
`;

const Viewport = styled.section`
  position: relative;
  flex: 1;
  min-width: 0;
  overflow: hidden;
  background: #e8eaed;
`;

const Scene = styled.svg`
  position: absolute;
  inset: 0;
  width: 100%;
  height: 100%;
`;

const SceneText = styled.text`
  font-family: "Liberation Mono", monospace;
  font-size: 14px;
  fill: ${(p) => (p.$dark ? "#111" : "#5f5866")};
`;

const ViewBar = styled.div`
  position: absolute;
  top: 7px;
  left: 50%;
  display: flex;
  align-items: center;
  gap: 3px;
  height: 44px;
  padding: 0 7px;
  border: 1px solid #a0a1a3;
  background: #f8f8f8;
  transform: translateX(-50%);
`;

const ViewButton = styled.button`
  position: relative;
  display: flex;
  align-items: center;
  justify-content: center;
  width: 35px;
  height: 35px;
  border: 1px solid transparent;
  ${(p) =>
    p.$on &&
    css`
      border-color: #a3a4a6;
      background: #dcddde;
    `}
`;

const Corner = styled.i`
  position: absolute;
  right: 1px;
  bottom: 3px;
  border: 2px solid #666;
  border-top-color: transparent;
  border-left-color: transparent;
`;

const Tooltip = styled.div`
  position: absolute;
  top: 484px;
  left: 1007px;
  padding: 9px 13px 10px;
  border: 1px solid #b9cfd1;
  background: #fff;
  box-shadow: 2px 2px 1px #88938f;
  color: #222;
  white-space: nowrap;
`;

const StatusBar = styled.footer`
  position: relative;
  display: flex;
  align-items: center;
  flex: none;
  gap: 12px;
  height: 50px;
  padding: 1px 27px 0 9px;
  border-top: 2px solid #97989b;
  background: linear-gradient(#dcdddf, #eeeff1 8px);
`;

const StatusToggle = styled.button`
  padding: 3px;
  border: 1px solid #a3a4a6;
  background: #dcddde;
`;

const Message = styled.p`
  display: flex;
  flex: 1;
  gap: 8px;
  align-self: flex-start;
  margin: 8px 0 0;
  font-size: 16px;
  &::before {
    width: 8px;
    height: 8px;
    margin-top: 6px;
    border-radius: 50%;
    background: #1d5d75;
    content: "";
  }
`;

const FindArea = styled.div`
  display: flex;
  height: 38px;
  margin-right: 130px;
  padding: 2px 3px;
  border: 1px solid #a6a6a6;
  border-width: 0 1px;
  &::before {
    width: 1px;
    margin: -2px 64px -2px -65px;
    background: #a6a6a6;
    content: "";
  }
`;

const FindButton = styled.button`
  display: grid;
  place-items: center;
  width: 42px;
  border: 1px solid #b0b1b3;
  background: #fafafa;
`;

const FindMenu = styled(FindButton)`
  width: 22px;
  border-left: 0;
`;

const FilterBox = styled.div`
  display: flex;
  width: 258px;
  height: 34px;
  border: 1px solid #a6a7aa;
  background: #fafafa;
  select {
    flex: 1;
    padding-left: 10px;
    appearance: none;
  }
`;

const FilterArrow = styled.span`
  display: grid;
  place-items: center;
  width: 24px;
  border-left: 1px solid #b0b1b3;
  pointer-events: none;
`;

/* forum badge that lies over the filter box */
const Watermark = styled.div`
  position: absolute;
  right: 0;
  bottom: 0;
  display: flex;
  align-items: center;
  width: 205px;
  height: 61px;
  background: rgba(245, 248, 250, 0.55);
  pointer-events: none;
  div {
    display: flex;
    flex-direction: column;
    flex: 1;
  }
  strong {
    padding-left: 12px;
    font-size: 29px;
    line-height: 34px;
    color: #93d3a8;
  }
  span {
    font-size: 15px;
    line-height: 22px;
    color: #c0d3d8;
  }
`;

export default App;
